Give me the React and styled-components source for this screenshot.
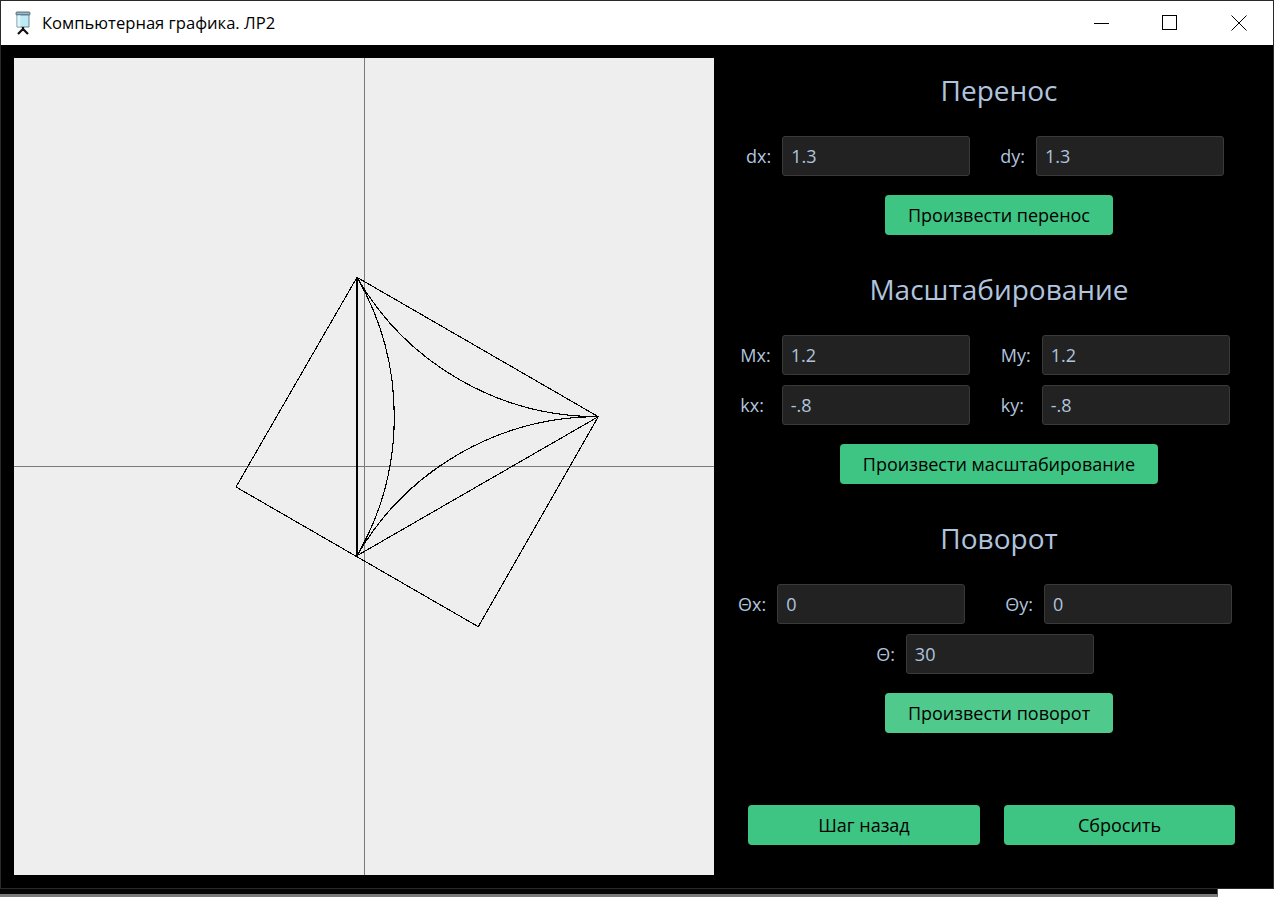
import React from 'react';
import styled, { createGlobalStyle } from 'styled-components';

const GlobalStyle = createGlobalStyle`
  html, body {
    margin: 0;
    padding: 0;
    background: #ffffff;
  }
  body {
    font-family: "Open Sans", "Noto Sans", sans-serif;
  }
`;

const Screen = styled.div`
  width: 1274px;
  height: 897px;
  display: flex;
  flex-direction: column;
  overflow: hidden;
`;

const Window = styled.div`
  width: 1274px;
  height: 889px;
  box-sizing: border-box;
  border: 1px solid #2a2a2a;
  display: flex;
  flex-direction: column;
  background: #000;
  flex-shrink: 0;
`;

const TitleBar = styled.div`
  height: 44px;
  flex-shrink: 0;
  background: #fff;
  display: flex;
  align-items: center;
`;

const AppIcon = styled.svg`
  margin-left: 13px;
  width: 18px;
  height: 24px;
  flex-shrink: 0;
`;

const TitleText = styled.div`
  margin-left: 10px;
  font-size: 16.6px;
  color: #000;
  flex: 1;
  padding-bottom: 2px;
`;

const Controls = styled.div`
  display: flex;
  height: 100%;
`;

const ControlButton = styled.div`
  width: 69px;
  height: 100%;
  display: flex;
  align-items: center;
  justify-content: center;
`;

const Content = styled.div`
  flex: 1;
  display: flex;
  padding: 13px 0 13px 13px;
  min-height: 0;
`;

const Canvas = styled.div`
  width: 700px;
  height: 817px;
  background: #eeeeee;
  flex-shrink: 0;
`;

const Panel = styled.div`
  flex: 1;
  display: flex;
  flex-direction: column;
  align-items: center;
  padding: 12px 0 30px 11px;
`;

const Section = styled.div`
  display: flex;
  flex-direction: column;
  align-items: center;
  & + & {
    margin-top: 34px;
  }
`;

const Heading = styled.h2`
  margin: 0 0 26px;
  font-size: 28px;
  line-height: 40px;
  font-weight: 400;
  color: #b0c4de;
`;

const FieldStack = styled.div`
  display: flex;
  flex-direction: column;
  align-items: center;
  gap: 10px;
  margin-right: 28px;
`;

const FieldGrid = styled.div`
  display: grid;
  grid-template-columns: auto 188px auto 188px;
  align-items: center;
  column-gap: 11px;
  row-gap: 10px;
`;

const Field = styled.label`
  display: flex;
  align-items: center;
  gap: 11px;
`;

const FieldLabel = styled.span`
  font-size: 18px;
  color: #b0c4de;
  padding-left: ${(p) => p.$lead || 0}px;
`;

const Input = styled.input`
  width: 188px;
  height: 40px;
  box-sizing: border-box;
  background: #222222;
  border: 1px solid #3a3a3a;
  border-radius: 3px;
  color: #b0c4de;
  font-family: inherit;
  font-size: 18px;
  padding: 0 8px;
  outline: none;
`;

const ActionButton = styled.button`
  height: 40px;
  margin-top: 19px;
  padding: 0 23px;
  border: none;
  border-radius: 4px;
  background: ${(p) => (p.$hover ? '#4fc98c' : '#3ec483')};
  color: #000;
  font-family: inherit;
  font-size: 18px;
`;

const Footer = styled.div`
  margin-top: auto;
  margin-right: 15px;
  display: flex;
  gap: 24px;
`;

const FooterButton = styled(ActionButton)`
  margin-top: 0;
  width: ${(p) => p.$w}px;
  padding: 0;
`;

const Backdrop = styled.div`
  flex: 1;
  display: flex;
`;

const BehindWindow = styled.div`
  width: 1218px;
  box-sizing: border-box;
  background: #050505;
  border-right: 1px solid #555;
  border-bottom: 3px solid #7a7a7a;
`;

const Desktop = styled.div`
  flex: 1;
  background: #fff;
`;

function ProjectorIcon() {
  return (
    <AppIcon viewBox="0 0 18 24">
      <rect x="2" y="1" width="14" height="3" rx="1" fill="#9bb6c4" stroke="#3b5563" strokeWidth="0.8" />
      <path d="M3 4 L15 4 L15 16 L3 16 Z" fill="#bdeaf4" stroke="#4a6b78" strokeWidth="0.8" />
      <rect x="3.4" y="4.4" width="3" height="11.2" fill="#dff6fb" />
      <path d="M9 16 L9 20 M9 18 L4 23 M9 18 L14 23" stroke="#111" strokeWidth="2.2" fill="none" />
    </AppIcon>
  );
}

function Scene() {
  const A = [343, 219.3];
  const B = [584.3, 358.7];
  const C = [343, 497.7];
  const D = [464.3, 568.7];
  const E = [222, 429];
  const r = 278.5;
  const p = (pt) => `${pt[0]} ${pt[1]}`;
  return (
    <svg width="700" height="817" viewBox="0 0 700 817">
      <g stroke="#7a7a7a" strokeWidth="1" shapeRendering="crispEdges">
        <line x1="350.5" y1="0" x2="350.5" y2="817" />
        <line x1="0" y1="408.5" x2="700" y2="408.5" />
      </g>
      <g stroke="#000" strokeWidth="1.1" fill="none" shapeRendering="crispEdges">
        <path d={`M${p(A)} L${p(B)} L${p(D)} L${p(E)} Z`} />
        <path d={`M${p(A)} L${p(B)} L${p(C)}`} />
        <path d={`M${p(A)} A${r} ${r} 0 0 1 ${p(C)}`} />
        <path d={`M${p(A)} A${r} ${r} 0 0 0 ${p(B)}`} />
        <path d={`M${p(B)} A${r} ${r} 0 0 0 ${p(C)}`} />
        <line x1="343" y1={A[1]} x2="343" y2={C[1]} strokeWidth="2" />
      </g>
    </svg>
  );
}

export default function App() {
  return (
    <Screen>
      <GlobalStyle />
      <Window>
        <TitleBar>
          <ProjectorIcon />
          <TitleText>Компьютерная графика. ЛР2</TitleText>
          <Controls>
            <ControlButton>
              <svg width="16" height="16" viewBox="0 0 16 16">
                <line x1="0.5" y1="8.5" x2="15.5" y2="8.5" stroke="#000" strokeWidth="1" shapeRendering="crispEdges" />
              </svg>
            </ControlButton>
            <ControlButton>
              <svg width="16" height="16" viewBox="0 0 16 16">
                <rect x="0.5" y="0.5" width="14" height="14" fill="none" stroke="#000" strokeWidth="1" shapeRendering="crispEdges" />
              </svg>
            </ControlButton>
            <ControlButton>
              <svg width="16" height="16" viewBox="0 0 16 16">
                <path d="M0.5 0.5 L15.5 15.5 M15.5 0.5 L0.5 15.5" stroke="#000" strokeWidth="1" fill="none" />
              </svg>
            </ControlButton>
          </Controls>
        </TitleBar>
        <Content>
          <Canvas>
            <Scene />
          </Canvas>
          <Panel>
            <Section>
              <Heading>Перенос</Heading>
              <FieldStack>
                <FieldGrid>
                  <FieldLabel>dx:</FieldLabel>
                  <Input defaultValue="1.3" />
                  <FieldLabel $lead={19}>dy:</FieldLabel>
                  <Input defaultValue="1.3" />
                </FieldGrid>
              </FieldStack>
              <ActionButton>Произвести перенос</ActionButton>
            </Section>
            <Section>
              <Heading>Масштабирование</Heading>
              <FieldStack>
                <FieldGrid>
                  <FieldLabel>Mx:</FieldLabel>
                  <Input defaultValue="1.2" />
                  <FieldLabel $lead={20}>My:</FieldLabel>
                  <Input defaultValue="1.2" />
                  <FieldLabel>kx:</FieldLabel>
                  <Input defaultValue="-.8" />
                  <FieldLabel $lead={20}>ky:</FieldLabel>
                  <Input defaultValue="-.8" />
                </FieldGrid>
              </FieldStack>
              <ActionButton>Произвести масштабирование</ActionButton>
            </Section>
            <Section>
              <Heading>Поворот</Heading>
              <FieldStack>
                <FieldGrid>
                  <FieldLabel>Θx:</FieldLabel>
                  <Input defaultValue="0" />
                  <FieldLabel $lead={29}>Θy:</FieldLabel>
                  <Input defaultValue="0" />
                </FieldGrid>
                <Field>
                  <FieldLabel>Θ:</FieldLabel>
                  <Input defaultValue="30" />
                </Field>
              </FieldStack>
              <ActionButton $hover>Произвести поворот</ActionButton>
            </Section>
            <Footer>
              <FooterButton $w={232}>Шаг назад</FooterButton>
              <FooterButton $w={231}>Сбросить</FooterButton>
            </Footer>
          </Panel>
        </Content>
      </Window>
      <Backdrop>
        <BehindWindow />
        <Desktop />
      </Backdrop>
    </Screen>
  );
}
